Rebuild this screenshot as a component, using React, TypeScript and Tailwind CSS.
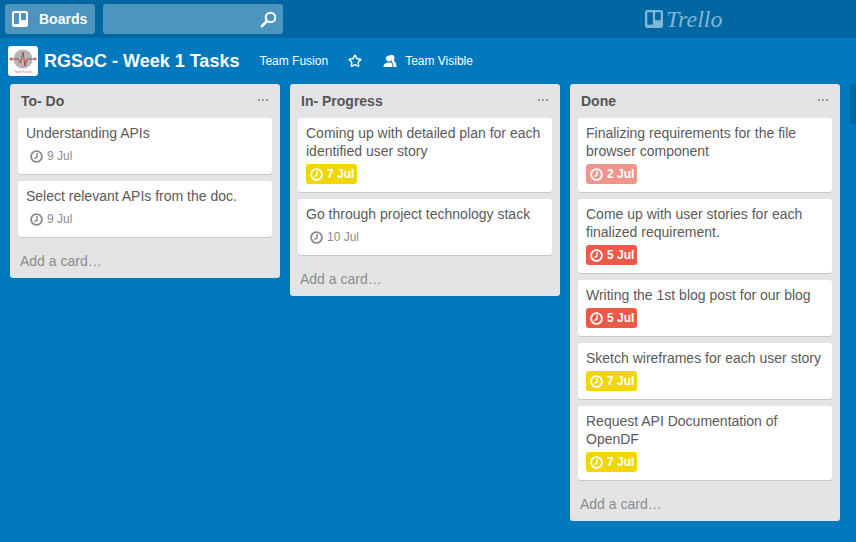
import React from 'react';
import { Star } from 'lucide-react';

type Due = { date: string; tone: 'plain' | 'yellow' | 'red' | 'faded' };
type Card = { title: string; due: Due };
type List = { name: string; cards: Card[] };

const LISTS: List[] = [
  {
    name: 'To- Do',
    cards: [
      { title: 'Understanding APIs', due: { date: '9 Jul', tone: 'plain' } },
      { title: 'Select relevant APIs from the doc.', due: { date: '9 Jul', tone: 'plain' } },
    ],
  },
  {
    name: 'In- Progress',
    cards: [
      { title: 'Coming up with detailed plan for each identified user story', due: { date: '7 Jul', tone: 'yellow' } },
      { title: 'Go through project technology stack', due: { date: '10 Jul', tone: 'plain' } },
    ],
  },
  {
    name: 'Done',
    cards: [
      { title: 'Finalizing requirements for the file browser component', due: { date: '2 Jul', tone: 'faded' } },
      { title: 'Come up with user stories for each finalized requirement.', due: { date: '5 Jul', tone: 'red' } },
      { title: 'Writing the 1st blog post for our blog', due: { date: '5 Jul', tone: 'red' } },
      { title: 'Sketch wireframes for each user story', due: { date: '7 Jul', tone: 'yellow' } },
      { title: 'Request API Documentation of OpenDF', due: { date: '7 Jul', tone: 'yellow' } },
    ],
  },
];

const TONES: Record<Due['tone'], string> = {
  plain: 'text-[#8c8c8c] font-normal',
  yellow: 'bg-[#f2d600] text-white font-bold',
  red: 'bg-[#eb5a46] text-white font-bold',
  faded: 'bg-[#f0958a] text-white font-bold',
};

const BoardGlyph = ({ size, box, bar }: { size: number; box: string; bar: string }) => (
  <svg width={size} height={size} viewBox="0 0 16 16">
    <rect width="16" height="16" rx="2" fill={box} />
    <rect x="2" y="2" width="5" height="11" rx="0.6" fill={bar} />
    <rect x="9" y="2" width="5" height="7" rx="0.6" fill={bar} />
  </svg>
);

const Clock = ({ color }: { color: string }) => (
  <svg width="13" height="13" viewBox="0 0 13 13" fill="none" stroke={color} strokeWidth="1.9">
    <circle cx="6.5" cy="6.5" r="5.4" />
    <path d="M7 3V7L4.4 8.6" strokeWidth="1.5" />
  </svg>
);

const DueBadge = ({ due }: { due: Due }) => (
  <div className={`mt-1 flex h-5 w-fit items-center gap-1 rounded-[3px] pl-1 pr-[3px] text-xs ${TONES[due.tone]}`}>
    <Clock color={due.tone === 'plain' ? '#8c8c8c' : '#ffffff'} />
    <span>{due.date}</span>
  </div>
);

const TaskCard = ({ card }: { card: Card }) => (
  <div className="rounded-[3px] bg-white px-2 pb-2 pt-1.5 shadow-[0_1px_0_#c4c9cc]">
    <div className="text-sm leading-[18px] text-[#5a5a5a]">{card.title}</div>
    <DueBadge due={card.due} />
  </div>
);

const BoardList = ({ list }: { list: List }) => (
  <div className="w-[270px] shrink-0 rounded-[3px] bg-[#e2e4e6]">
    <div className="flex h-[34px] items-center justify-between pl-[11px] pr-3">
      <h2 className="text-sm font-bold text-[#555555]">{list.name}</h2>
      <div className="flex gap-0.5 pb-0.5">
        <span className="h-0.5 w-0.5 bg-[#999]"></span>
        <span className="h-0.5 w-0.5 bg-[#999]"></span>
        <span className="h-0.5 w-0.5 bg-[#999]"></span>
      </div>
    </div>
    <div className="flex flex-col gap-[7px] px-2">
      {list.cards.map((card) => (
        <TaskCard key={card.title} card={card} />
      ))}
    </div>
    <div className="flex h-[41px] items-center pl-2.5 pt-[7px] text-sm text-[#8c8c8c]">Add a card…</div>
  </div>
);

const TeamLogo = () => (
  <div className="flex h-[30px] w-[30px] items-center justify-center rounded-[3px] bg-white">
    <svg width="30" height="30" viewBox="0 0 30 30" fill="none">
      <circle cx="15" cy="13" r="9.5" fill="#b5b5b5" />
      <path d="M2 13H10L12.5 17L15 6L17 20L19 13H28" stroke="#b8333a" strokeWidth="0.9" />
      <circle cx="3" cy="13" r="1.2" stroke="#b8333a" strokeWidth="0.7" />
      <circle cx="27" cy="13" r="1.2" stroke="#b8333a" strokeWidth="0.7" />
      <text x="15" y="27" textAnchor="middle" fontSize="3" fill="#d9666b">Team Fusion</text>
    </svg>
  </div>
);

export default function App() {
  return (
    <div className="h-[542px] w-[856px] overflow-hidden bg-[#0079bf] font-['Liberation_Sans',Arial,sans-serif]">
      <header className="flex h-[38px] items-center bg-[#0067a3] pl-[5px]">
        <button className="flex h-[30px] w-[90px] items-center gap-[11px] rounded-[3px] bg-[#4d95bf] pl-[7px] text-sm font-bold text-white">
          <BoardGlyph size={16} box="#ffffff" bar="#4d95bf" />
          Boards
        </button>
        <div className="ml-2 flex h-[30px] w-[180px] items-center justify-end rounded-[3px] bg-[#4d95bf] pr-[6px]">
          <svg width="17" height="17" viewBox="0 0 17 17" fill="none" stroke="#ffffff">
            <circle cx="10.5" cy="6.5" r="4.8" strokeWidth="2" />
            <path d="M7 10L2 15" strokeWidth="2.6" strokeLinecap="round" />
          </svg>
        </div>
        <div className="ml-[362px] flex items-center gap-[3px] text-[#80b6d6]">
          <BoardGlyph size={18} box="#80b6d6" bar="#0067a3" />
          <span className="font-['Liberation_Serif',serif] text-[24px] italic leading-none">Trello</span>
        </div>
      </header>

      <div className="flex h-[46px] items-center pl-2 text-white">
        <TeamLogo />
        <h1 className="ml-1.5 text-lg font-bold">RGSoC - Week 1 Tasks</h1>
        <span className="ml-5 text-xs">Team Fusion</span>
        <Star size={14} strokeWidth={2.4} className="ml-5" />
        <svg width="14" height="14" viewBox="0 0 14 14" className="ml-[21px]" fill="#ffffff">
          <circle cx="6" cy="4.5" r="3" />
          <path d="M0.5 13C0.5 10.5 2.5 8.5 6 8.5S9.5 10.5 9.5 13Z" />
          <path d="M7 1C9 0 11.5 1.2 11.5 4C11.5 5.2 11 6 10.5 6.6C12.3 7.4 13.5 9.5 13.5 13H10.5C10.5 10.5 9.8 8.8 8.4 7.6C9.5 5.5 9 2.6 7 1Z" />
        </svg>
        <span className="ml-2 text-xs">Team Visible</span>
      </div>

      <main className="flex items-start gap-2.5 pl-2.5">
        {LISTS.map((list) => (
          <BoardList key={list.name} list={list} />
        ))}
        <div className="h-10 w-4 shrink-0 rounded-[3px] bg-[#0067a3]"></div>
      </main>
    </div>
  );
}
